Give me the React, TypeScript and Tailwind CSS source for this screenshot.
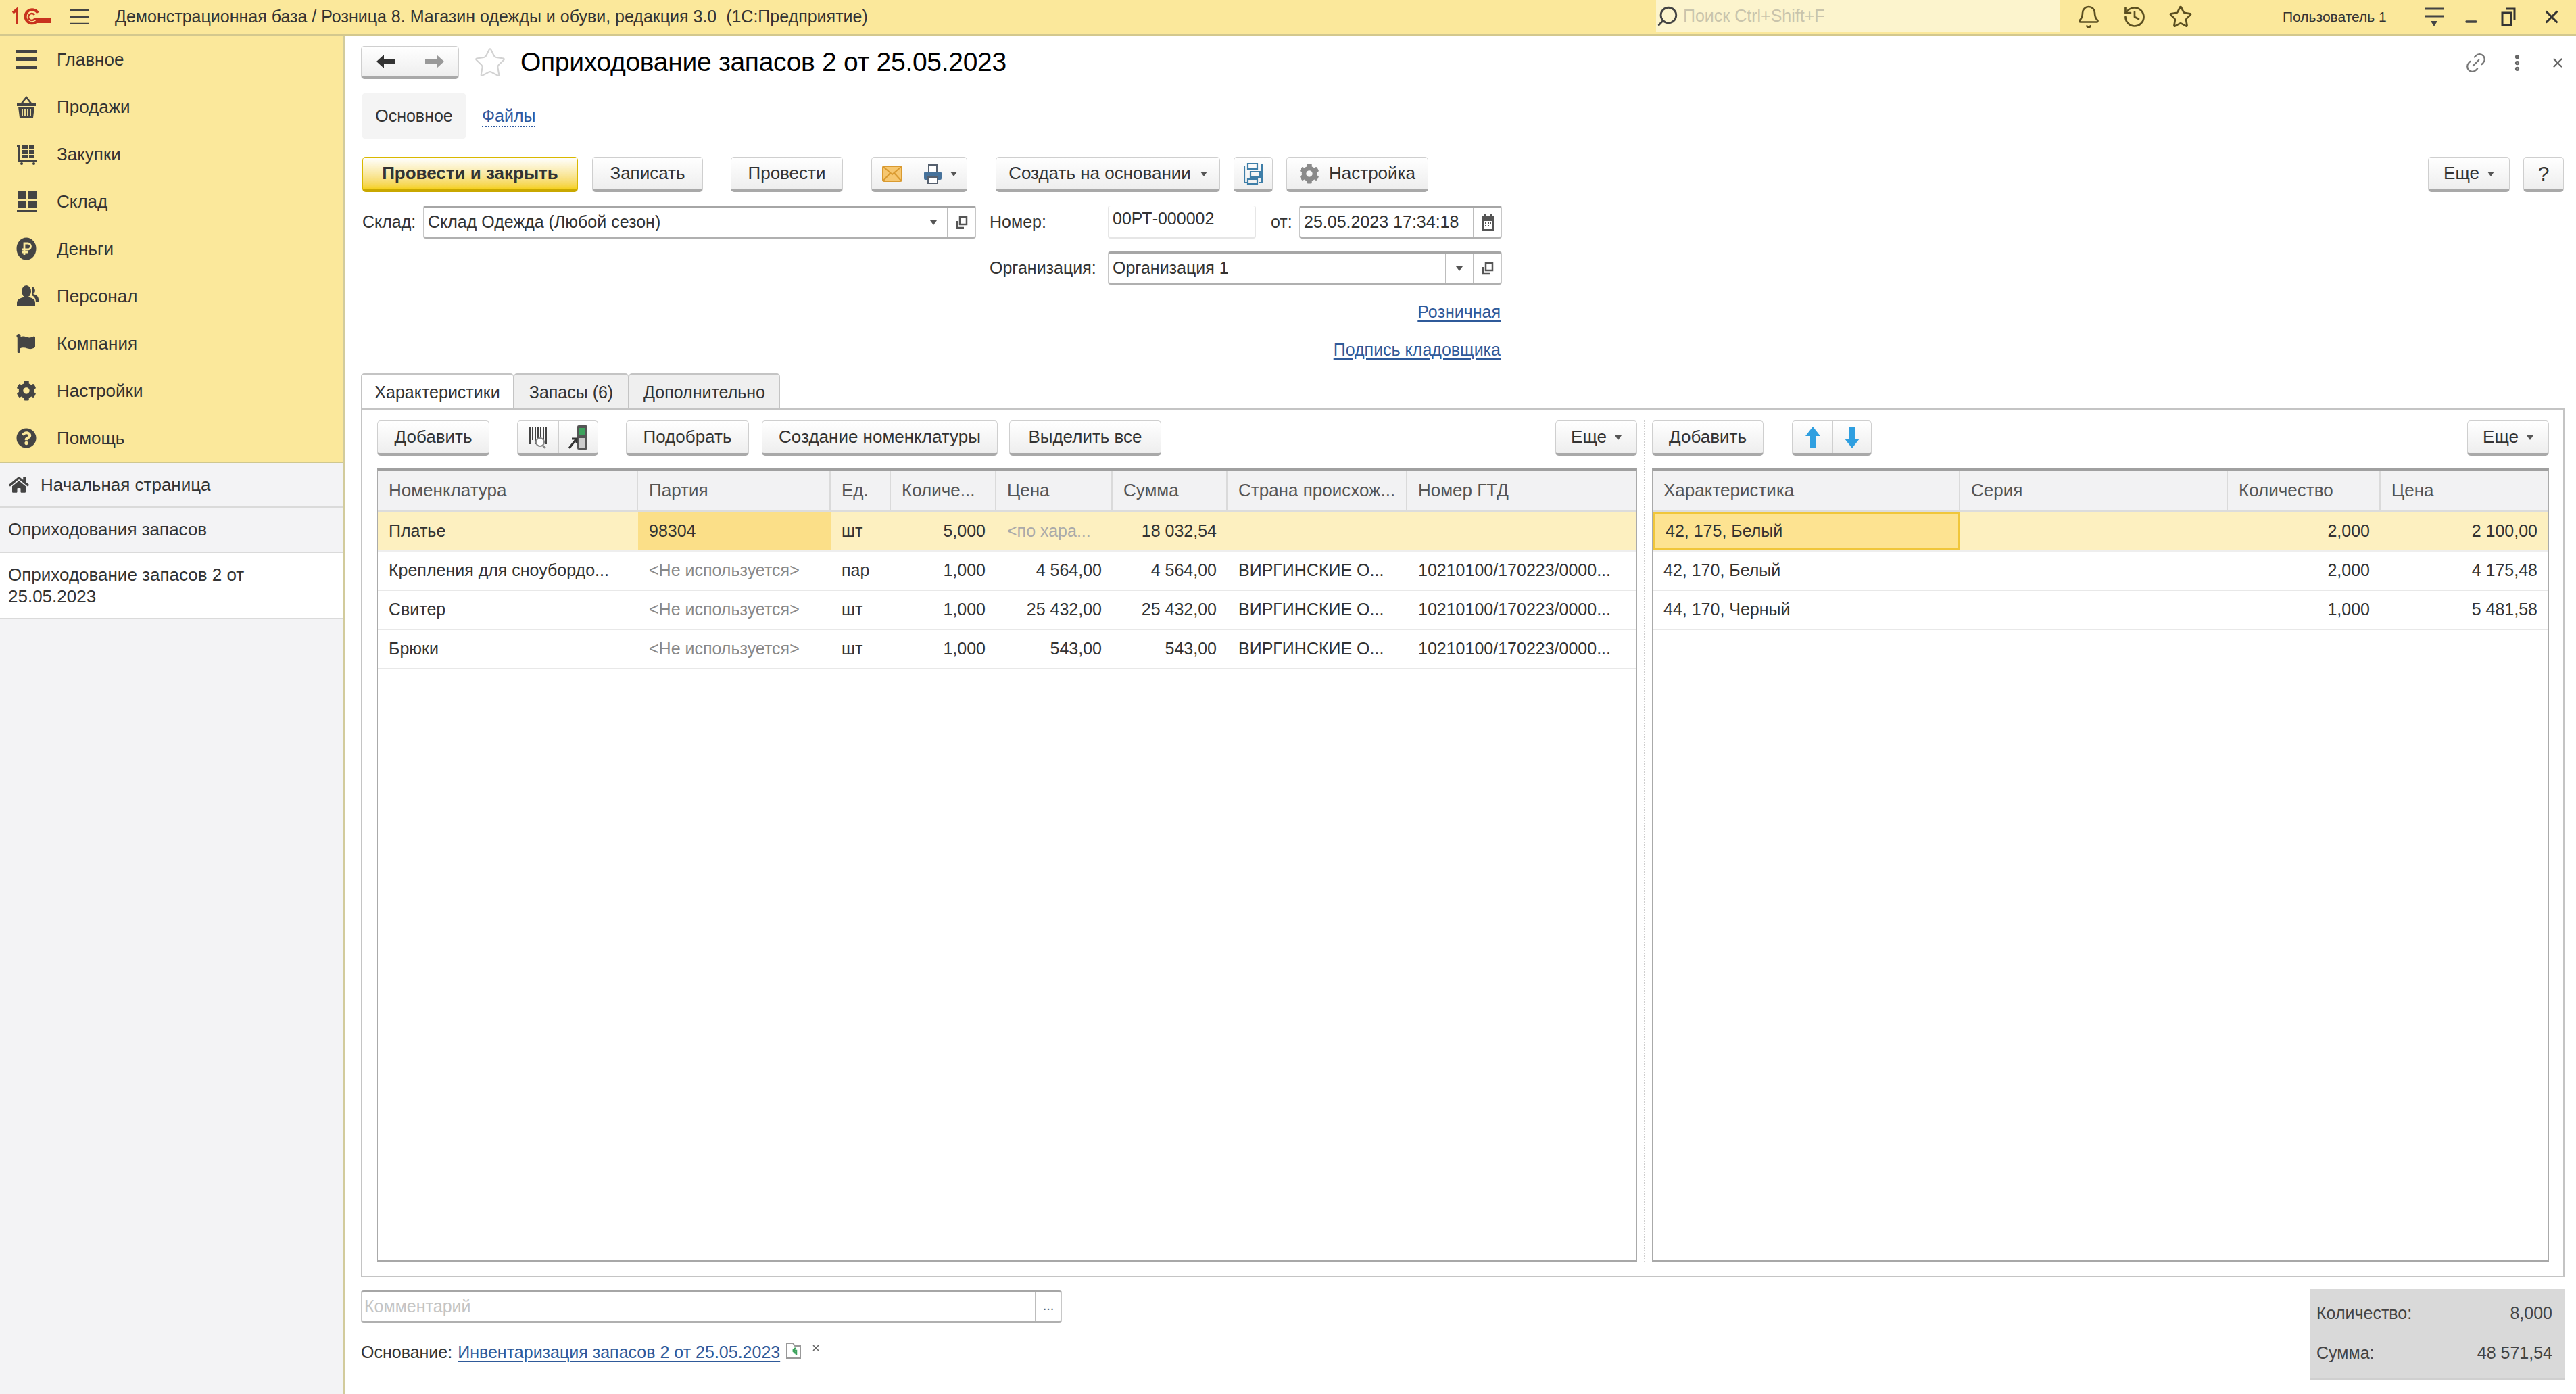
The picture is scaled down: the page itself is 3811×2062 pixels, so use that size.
import type { ReactNode } from 'react';
import { Star, Link2, EllipsisVertical, X, Bell, History, Search, Minus } from 'lucide-react';
import { FaCog, FaFlag, FaHome, FaQuestionCircle, FaUser } from 'react-icons/fa';

const Caret = ({ className = '' }: { className?: string }) => (
  <svg viewBox="0 0 10 8" className={`w-[10px] h-[8px] ${className}`}>
    <path d="M0 1h10L5 8z" fill="#555" />
  </svg>
);

const OpenIcon = () => (
  <svg viewBox="0 0 18 20" className="w-[18px] h-[20px]">
    <path d="M6 2h10v11H6z" fill="none" stroke="#555" strokeWidth="2.5" />
    <path d="M2 8v10h10" fill="none" stroke="#555" strokeWidth="2.5" />
  </svg>
);

function Btn({ children, className = '' }: { children: ReactNode; className?: string }) {
  return (
    <div
      className={`h-[52px] flex items-center justify-center shrink-0 rounded-[5px] border border-[#cfcfcf] border-b-[4px] border-b-[#a9a9a9] bg-linear-to-b from-white to-[#eeeeee] text-[#333] text-[26px] ${className}`}
    >
      {children}
    </div>
  );
}

function Field({ children, className = '', light = false }: { children: ReactNode; className?: string; light?: boolean }) {
  return (
    <div
      className={`h-[49px] flex items-stretch shrink-0 rounded-[4px] bg-white text-[#333] text-[25px] border ${
        light ? 'border-[#e6e6e6] border-b-[3px]' : 'border-[#c8c8c8] border-t-[3px] border-t-[#a6a6a6] border-b-[3px] border-b-[#b0b0b0]'
      } ${className}`}
    >
      {children}
    </div>
  );
}

const FieldBtn = ({ children, className = '' }: { children: ReactNode; className?: string }) => (
  <div className={`shrink-0 flex items-center justify-center border-l border-[#bdbdbd] ${className}`}>{children}</div>
);

const Basket = () => (
  <svg viewBox="0 0 30 32" className="w-[30px] h-[32px]" fill="#444">
    <path d="M1 11h28v4H1z" />
    <path d="M3 16h24l-2 16H5z" />
    <path d="M8 11 15 2l7 9" fill="none" stroke="#444" strokeWidth="2.5" />
    <path d="M9 19v10M13 19v10M17 19v10M21 19v10" stroke="#fbe99b" strokeWidth="1.8" />
  </svg>
);

const CartGrid = () => (
  <svg viewBox="0 0 32 32" className="w-[32px] h-[32px]" fill="#444">
    <path d="M1 2h5v22h24v3H3V5H1z" />
    <path d="M9 2h8v6H9zM19 2h8v6h-8zM9 10h8v6H9zM19 10h8v6h-8zM9 17h8v5H9zM19 17h8v5h-8z" />
    <circle cx="8" cy="30" r="2" />
    <circle cx="26" cy="30" r="2" />
  </svg>
);

const Warehouse = () => (
  <svg viewBox="0 0 32 32" className="w-[32px] h-[32px]" fill="#444">
    <path d="M2 1h12v12H2zM17 1h13v12H17zM2 15h12v11H2zM17 15h13v11H17zM1 28h30v3H1z" />
  </svg>
);

const Ruble = () => (
  <svg viewBox="0 0 30 34" className="w-[30px] h-[34px]">
    <ellipse cx="15" cy="17" rx="14.5" ry="16.5" fill="#444" />
    <path d="M12 26V9h5a4.5 4.5 0 0 1 0 9H8M8 22h9" fill="none" stroke="#fbe99b" strokeWidth="2.8" />
  </svg>
);

const People = () => (
  <svg viewBox="0 0 34 32" className="w-[34px] h-[32px]" fill="#444">
    <path d="M23 2a6 6 0 0 1 2 11c4 1 8 3 8 8v4h-4c0-6-3-9-6-10z" />
    <ellipse cx="15" cy="9" rx="7" ry="9" />
    <path d="M1 31v-5c0-5 5-7 9-8h10c4 1 8 3 8 8v5z" />
  </svg>
);

const BarsIcon = () => (
  <svg viewBox="0 0 30 28" className="w-[30px] h-[28px]" fill="#444">
    <path d="M0 0h30v5H0zM0 11h30v5H0zM0 23h30v5H0z" />
  </svg>
);

const navItems: { label: string; icon: ReactNode }[] = [
  { label: 'Главное', icon: <BarsIcon /> },
  { label: 'Продажи', icon: <Basket /> },
  { label: 'Закупки', icon: <CartGrid /> },
  { label: 'Склад', icon: <Warehouse /> },
  { label: 'Деньги', icon: <Ruble /> },
  { label: 'Персонал', icon: <People /> },
  { label: 'Компания', icon: <FaFlag size={28} color="#444" /> },
  { label: 'Настройки', icon: <FaCog size={30} color="#444" /> },
  { label: 'Помощь', icon: <FaQuestionCircle size={30} color="#444" /> },
];

const leftCols = 'grid-cols-[385px_285px_89px_156px_172px_170px_266px_1fr]';
const rightCols = 'grid-cols-[455px_396px_226px_1fr]';

const leftHeader = ['Номенклатура', 'Партия', 'Ед.', 'Количе...', 'Цена', 'Сумма', 'Страна происхож...', 'Номер ГТД'];
const rightHeader = ['Характеристика', 'Серия', 'Количество', 'Цена'];

const gtd = '10210100/170223/0000...';
const leftRows = [
  { name: 'Крепления для сноубордо...', unit: 'пар', qty: '1,000', price: '4 564,00', sum: '4 564,00' },
  { name: 'Свитер', unit: 'шт', qty: '1,000', price: '25 432,00', sum: '25 432,00' },
  { name: 'Брюки', unit: 'шт', qty: '1,000', price: '543,00', sum: '543,00' },
];
const rightRows = [
  ['42, 170, Белый', '2,000', '4 175,48'],
  ['44, 170, Черный', '1,000', '5 481,58'],
];

const Cell = ({ children, className = '' }: { children?: ReactNode; className?: string }) => (
  <div className={`px-[16px] flex items-center whitespace-nowrap overflow-hidden ${className}`}>{children}</div>
);

function HeaderRow({ cols, titles }: { cols: string; titles: string[] }) {
  return (
    <div className={`grid ${cols} h-[62px] shrink-0 bg-[#f2f2f3] border-b-[3px] border-[#dcdcdc] text-[#555] text-[26px]`}>
      {titles.map((t, i) => (
        <div key={t} className={`flex items-center px-[16px] whitespace-nowrap border-[#dadada] ${i < titles.length - 1 ? 'border-r-2' : ''}`}>
          {t}
        </div>
      ))}
    </div>
  );
}

export default function App() {
  return (
    <div className="w-[3811px] h-[2062px] flex flex-col overflow-hidden bg-white font-['Liberation_Sans',Arial,sans-serif] text-[#333]">
      {/* top bar */}
      <div className="h-[53px] shrink-0 flex items-center bg-[#fbe89b] border-b-[3px] border-[#d3c88e]">
        <div className="w-[170px] shrink-0 flex items-center pl-[18px]">
          <svg viewBox="0 0 58 28" className="w-[58px] h-[28px]" fill="none" stroke="#c8321e" strokeWidth="4">
            <path d="M1 8l6-5v22" />
            <path d="M38 8a10 10 0 1 0-2 13h22" />
            <path d="M33 11a5 5 0 1 0 0 6h25" strokeWidth="2.5" />
          </svg>
          <svg viewBox="0 0 28 22" className="w-[28px] h-[22px] ml-[28px]">
            <path d="M0 1h28M0 11h28M0 21h28" stroke="#444" strokeWidth="2.5" />
          </svg>
        </div>
        <div className="w-[2280px] shrink-0 text-[25px] whitespace-pre">Демонстрационная база / Розница 8. Магазин одежды и обуви, редакция 3.0  (1С:Предприятие)</div>
        <div className="w-[598px] h-[47px] self-start shrink-0 flex items-center bg-[#fcf4cd] text-[#c9c4ac] text-[25px]">
          <Search size={34} color="#444" strokeWidth={2} className="mr-[6px] -scale-x-100" />
          Поиск Ctrl+Shift+F
        </div>
        <div className="flex items-center ml-[24px] gap-[32px]">
          <Bell size={36} color="#5a4e20" strokeWidth={1.8} />
          <History size={36} color="#5a4e20" strokeWidth={1.8} />
          <Star size={36} color="#5a4e20" strokeWidth={1.8} />
        </div>
        <div className="ml-[133px] w-[190px] shrink-0 text-[21px] whitespace-nowrap">Пользователь 1</div>
        <svg viewBox="0 0 28 30" className="w-[28px] h-[30px] ml-[20px]">
          <path d="M0 3h28M0 14h28" stroke="#444" strokeWidth="3" />
          <path d="M9 21h10l-5 8z" fill="#444" />
        </svg>
        <Minus size={24} color="#444" strokeWidth={3.5} className="ml-[29px] mt-[14px]" />
        <svg viewBox="0 0 22 28" className="w-[22px] h-[28px] ml-[32px]" fill="none" stroke="#333" strokeWidth="3">
          <path d="M7 2h13v17" />
          <path d="M2 8h13v18H2z" />
        </svg>
        <X size={30} color="#333" strokeWidth={2.5} className="ml-[38px]" />
      </div>

      <div className="flex-1 flex min-h-0">
        {/* sidebar */}
        <div className="w-[511px] shrink-0 flex flex-col bg-[#f3f3f5] border-r-[3px] border-[#d2cb9c]">
          <div className="bg-[#fbe89b] border-b-2 border-[#cfc78f]">
            {navItems.map((item) => (
              <div key={item.label} className="h-[70px] flex items-center text-[26px]">
                <div className="w-[84px] pl-[24px] shrink-0 flex items-center">{item.icon}</div>
                {item.label}
              </div>
            ))}
          </div>
          <div className="h-[66px] flex items-center pl-[13px] text-[26px] border-b-2 border-[#dadada]">
            <FaHome size={30} color="#444" className="mr-[17px]" />
            Начальная страница
          </div>
          <div className="h-[67px] flex items-center pl-[12px] text-[26px] border-b-2 border-[#dadada]">Оприходования запасов</div>
          <div className="h-[98px] flex items-center pl-[12px] pr-[120px] text-[26px] leading-[32px] bg-white border-b-2 border-[#dadada]">
            Оприходование запасов 2 от 25.05.2023
          </div>
        </div>

        {/* form */}
        <div className="flex-1 min-w-0 flex flex-col pl-[23px] pr-[18px]">
          <div className="flex items-center mt-[15px] h-[49px] shrink-0">
            <div className="w-[145px] h-[49px] flex rounded-[5px] border border-[#cfcfcf] border-b-[4px] border-b-[#a9a9a9] bg-linear-to-b from-white to-[#eeeeee]">
              <div className="flex-1 flex items-center justify-center border-r border-[#d0d0d0]">
                <svg viewBox="0 0 28 22" className="w-[28px] h-[22px]"><path d="M0 11 11 1v6h17v8H11v6z" fill="#333" /></svg>
              </div>
              <div className="flex-1 flex items-center justify-center">
                <svg viewBox="0 0 28 22" className="w-[28px] h-[22px]"><path d="M28 11 17 1v6H0v8h17v6z" fill="#999" /></svg>
              </div>
            </div>
            <Star size={50} color="#d2d2d2" strokeWidth={1} className="ml-[21px]" />
            <div className="ml-[20px] text-[39px] tracking-[-0.3px] text-black whitespace-nowrap">Оприходование запасов 2 от 25.05.2023</div>
            <div className="ml-auto flex items-center mr-[-2px]">
              <Link2 size={36} color="#777" strokeWidth={1.5} className="-rotate-45" />
              <EllipsisVertical size={30} color="#666" strokeWidth={3} className="ml-[28px]" />
              <X size={22} color="#666" strokeWidth={2.5} className="ml-[34px]" />
            </div>
          </div>

          <div className="flex items-center mt-[21px] h-[67px] shrink-0 text-[25px]">
            <div className="w-[153px] h-full flex items-center justify-center bg-[#f4f4f4] rounded-[4px] ml-[2px]">Основное</div>
            <div className="ml-[24px] text-[#2f5aa0] border-b-2 border-dotted border-[#2f5aa0] leading-[30px]">Файлы</div>
          </div>

          <div className="flex items-center mt-[27px] shrink-0">
            <Btn className="w-[319px] ml-[2px] border-[#d9b800] border-b-[#c9a800] from-[#fbe34a] to-[#f5d000] font-bold text-[25px]">Провести и закрыть</Btn>
            <Btn className="w-[164px] ml-[21px]">Записать</Btn>
            <Btn className="w-[166px] ml-[41px]">Провести</Btn>
            <Btn className="w-[142px] ml-[42px]">
              <div className="w-[61px] h-full flex items-center justify-center border-r border-[#cfcfcf]">
                <svg viewBox="0 0 30 24" className="w-[30px] h-[24px]">
                  <rect x="1" y="1" width="28" height="22" rx="2" fill="#f6c770" stroke="#d99a30" strokeWidth="2" />
                  <path d="M2 2l13 11L28 2M2 22l10-11M28 22 18 11" fill="none" stroke="#d99a30" strokeWidth="2" />
                </svg>
              </div>
              <div className="flex-1 h-full flex items-center justify-center gap-[12px]">
                <svg viewBox="0 0 28 30" className="w-[28px] h-[30px]">
                  <path d="M8 12V2h12v10" fill="#fff" stroke="#56606e" strokeWidth="2" />
                  <rect x="1" y="12" width="26" height="12" rx="2" fill="#46729b" />
                  <path d="M7 20h14v9H7z" fill="#fff" stroke="#56606e" strokeWidth="2" />
                </svg>
                <Caret />
              </div>
            </Btn>
            <Btn className="w-[332px] ml-[42px] gap-[14px]">
              Создать на основании
              <Caret />
            </Btn>
            <Btn className="w-[58px] ml-[20px]">
              <svg viewBox="0 0 28 34" className="w-[28px] h-[34px]" fill="none" stroke="#3e7ea8" strokeWidth="2.2">
                <path d="M6 2h14v8H6zM10 14h14v8H10zM6 25h14v7H6zM1 6v24h4M27 3v27h-4" />
              </svg>
            </Btn>
            <Btn className="w-[210px] ml-[20px] gap-[14px]">
              <FaCog size={30} color="#8a8a8a" />
              Настройка
            </Btn>
            <Btn className="w-[121px] ml-auto gap-[12px]">
              Еще
              <Caret />
            </Btn>
            <Btn className="w-[60px] ml-[20px] text-[30px]">?</Btn>
          </div>

          <div className="flex mt-[20px] shrink-0">
            <div className="w-[930px] flex items-center h-[49px] shrink-0 text-[25px]">
              <span className="w-[92px] pl-[2px]">Склад:</span>
              <Field className="w-[818px]">
                <div className="flex-1 pl-[6px] flex items-center">Склад Одежда (Любой сезон)</div>
                <FieldBtn className="w-[42px]"><Caret /></FieldBtn>
                <FieldBtn className="w-[42px]"><OpenIcon /></FieldBtn>
              </Field>
            </div>
            <div className="flex-1 flex flex-col text-[25px]">
              <div className="flex items-center h-[49px]">
                <span className="w-[175px] shrink-0">Номер:</span>
                <Field light className="w-[219px] items-center pl-[6px]">00РТ-000002</Field>
                <span className="ml-[22px] w-[42px] shrink-0">от:</span>
                <Field className="w-[300px]">
                  <div className="flex-1 pl-[6px] flex items-center whitespace-nowrap">25.05.2023 17:34:18</div>
                  <FieldBtn className="w-[42px]">
                    <svg viewBox="0 0 20 24" className="w-[20px] h-[24px]" fill="#555">
                      <path d="M4 0h3v4H4zM13 0h3v4h-3zM1 3h18v21H1z" />
                      <path d="M4 10h12v11H4z" fill="#fff" />
                      <path d="M6 12h2v2H6zM10 12h2v2h-2zM14 12h1v2h-1zM6 16h2v2H6zM10 16h2v2h-2z" />
                    </svg>
                  </FieldBtn>
                </Field>
              </div>
              <div className="flex items-center h-[49px] mt-[19px]">
                <span className="w-[175px] shrink-0">Организация:</span>
                <Field className="w-[583px]">
                  <div className="flex-1 pl-[6px] flex items-center">Организация 1</div>
                  <FieldBtn className="w-[41px]"><Caret /></FieldBtn>
                  <FieldBtn className="w-[42px]"><OpenIcon /></FieldBtn>
                </Field>
              </div>
              <div className="w-[758px] flex flex-col items-end pr-[2px] text-[#2f5a9a]">
                <div className="mt-[24px] h-[32px] leading-[32px] underline underline-offset-4">Розничная</div>
                <div className="mt-[24px] h-[32px] leading-[32px] underline underline-offset-4">Подпись кладовщика</div>
              </div>
            </div>
          </div>

          {/* tabs */}
          <div className="flex mt-[19px] h-[55px] shrink-0 text-[25px]">
            <div className="w-[226px] flex items-center justify-center bg-white rounded-t-[5px] border border-b-0 border-[#c4c4c4] border-t-2">Характеристики</div>
            <div className="w-[170px] flex items-center justify-center bg-[#efefef] rounded-t-[5px] border border-b-0 border-[#c4c4c4] border-t-2">Запасы (6)</div>
            <div className="w-[224px] flex items-center justify-center bg-[#efefef] rounded-t-[5px] border border-b-0 border-[#c4c4c4] border-t-2">Дополнительно</div>
          </div>

          {/* panel */}
          <div className="flex-1 min-h-0 flex pl-[22px] pr-[21px] pt-[15px] pb-[20px] border-2 border-[#c4c4c4] border-t-[3px] mt-[-3px] ml-0 -mr-[1px]">
            <div className="w-[1864px] shrink-0 flex flex-col">
              <div className="flex items-center shrink-0 text-[25px]">
                <Btn className="w-[166px]">Добавить</Btn>
                <Btn className="w-[120px] ml-[41px]">
                  <div className="w-[61px] h-full flex items-center justify-center border-r border-[#cfcfcf]">
                    <svg viewBox="0 0 30 34" className="w-[30px] h-[34px]">
                      <path d="M3 1v26M7 1v20M11 1v26M15 1v20M19 1v20M23 1v20M27 1v26" stroke="#444" strokeWidth="2" />
                      <circle cx="18" cy="24" r="6" fill="#fff" stroke="#888" strokeWidth="2" />
                      <path d="M22 29l4 4" stroke="#888" strokeWidth="2.5" />
                    </svg>
                  </div>
                  <div className="flex-1 h-full flex items-center justify-center">
                    <svg viewBox="0 0 32 40" className="w-[32px] h-[40px]">
                      <rect x="14" y="2" width="15" height="36" rx="2" fill="#555" />
                      <rect x="17" y="6" width="9" height="11" fill="#3da35d" />
                      <path d="M17 21h9v14h-9z" fill="#ccc" />
                      <path d="M2 36 13 22m-7 0h7v7" fill="none" stroke="#333" strokeWidth="3" />
                    </svg>
                  </div>
                </Btn>
                <Btn className="w-[182px] ml-[41px]">Подобрать</Btn>
                <Btn className="w-[349px] ml-[19px]">Создание номенклатуры</Btn>
                <Btn className="w-[225px] ml-[17px]">Выделить все</Btn>
                <Btn className="w-[121px] ml-auto gap-[12px]">Еще<Caret /></Btn>
              </div>
              <div className="flex-1 min-h-0 mt-[19px] flex flex-col border border-[#aaa] border-t-[3px] border-t-[#a0a0a0] border-b-[3px] border-b-[#a8a8a8] bg-white text-[25px]">
                <HeaderRow cols={leftCols} titles={leftHeader} />
                <div className={`grid ${leftCols} h-[58px] shrink-0 bg-[#fdf0c0] border-b-2 border-[#eeeeee]`}>
                  <Cell>Платье</Cell>
                  <Cell className="bg-[#fbdf88]">98304</Cell>
                  <Cell>шт</Cell>
                  <Cell className="justify-end">5,000</Cell>
                  <Cell className="text-[#aaa]">&lt;по хара...</Cell>
                  <Cell className="justify-end">18 032,54</Cell>
                  <Cell />
                  <Cell />
                </div>
                {leftRows.map((r) => (
                  <div key={r.name} className={`grid ${leftCols} h-[58px] shrink-0 border-b-2 border-[#e8e8e8]`}>
                    <Cell>{r.name}</Cell>
                    <Cell className="text-[#888]">&lt;Не используется&gt;</Cell>
                    <Cell>{r.unit}</Cell>
                    <Cell className="justify-end">{r.qty}</Cell>
                    <Cell className="justify-end">{r.price}</Cell>
                    <Cell className="justify-end">{r.sum}</Cell>
                    <Cell>ВИРГИНСКИЕ О...</Cell>
                    <Cell>{gtd}</Cell>
                  </div>
                ))}
              </div>
            </div>

            <div className="w-[22px] shrink-0 flex justify-center">
              <div className="h-full border-l-2 border-dotted border-[#cfcfcf]" />
            </div>

            <div className="flex-1 min-w-0 flex flex-col">
              <div className="flex items-center shrink-0 text-[25px]">
                <Btn className="w-[165px]">Добавить</Btn>
                <Btn className="w-[118px] ml-[42px]">
                  <div className="w-[60px] h-full flex items-center justify-center border-r border-[#cfcfcf]">
                    <svg viewBox="0 0 24 34" className="w-[24px] h-[34px]"><path d="M12 1 23 15h-7v18H8V15H1z" fill="#2f9fe0" /></svg>
                  </div>
                  <div className="flex-1 h-full flex items-center justify-center">
                    <svg viewBox="0 0 24 34" className="w-[24px] h-[34px]"><path d="M12 33 23 19h-7V1H8v18H1z" fill="#2f9fe0" /></svg>
                  </div>
                </Btn>
                <Btn className="w-[121px] ml-auto gap-[12px]">Еще<Caret /></Btn>
              </div>
              <div className="flex-1 min-h-0 mt-[19px] flex flex-col border border-[#aaa] border-t-[3px] border-t-[#a0a0a0] border-b-[3px] border-b-[#a8a8a8] bg-white text-[25px]">
                <HeaderRow cols={rightCols} titles={rightHeader} />
                <div className={`grid ${rightCols} h-[58px] shrink-0 bg-[#fdf0c0] border-b-2 border-[#eeeeee]`}>
                  <Cell className="bg-[#fde391] border-[3px] border-[#f0c63a]">42, 175, Белый</Cell>
                  <Cell />
                  <Cell className="justify-end">2,000</Cell>
                  <Cell className="justify-end">2 100,00</Cell>
                </div>
                {rightRows.map((r) => (
                  <div key={r[0]} className={`grid ${rightCols} h-[58px] shrink-0 border-b-2 border-[#e8e8e8]`}>
                    <Cell>{r[0]}</Cell>
                    <Cell />
                    <Cell className="justify-end">{r[1]}</Cell>
                    <Cell className="justify-end">{r[2]}</Cell>
                  </div>
                ))}
              </div>
            </div>
          </div>

          {/* footer */}
          <div className="h-[173px] shrink-0 flex justify-between text-[25px]">
            <div className="flex flex-col">
              <Field className="w-[1037px] mt-[19px]">
                <div className="flex-1 pl-[4px] flex items-center text-[#c4c4c4]">Комментарий</div>
                <FieldBtn className="w-[39px] text-[#666] items-end pb-[8px] text-[20px]">...</FieldBtn>
              </Field>
              <div className="flex items-center mt-[26px] h-[36px]">
                <span>Основание:</span>
                <span className="ml-[8px] text-[#2f5a9a] underline underline-offset-4 whitespace-nowrap">Инвентаризация запасов 2 от 25.05.2023</span>
                <svg viewBox="0 0 24 26" className="w-[24px] h-[26px] ml-[8px] mt-[-6px]" fill="none">
                  <path d="M2 24V2h9l3 4h8v18z" fill="#fff" stroke="#999" strokeWidth="2" />
                  <path d="M16 20v-7h-5m0 0 4-4m-4 4 4 4" stroke="#3da35d" strokeWidth="2.5" />
                </svg>
                <X size={14} color="#666" strokeWidth={3} className="ml-[14px] mt-[-14px]" />
              </div>
            </div>
            <div className="w-[377px] h-[135px] mt-[17px] mr-[-1px] flex flex-col justify-between py-[18px] px-[10px] pr-[18px] bg-[#d9d9d9] border-b-[3px] border-[#cfcfcf] text-[#444]">
              <div className="flex justify-between"><span>Количество:</span><span>8,000</span></div>
              <div className="flex justify-between"><span>Сумма:</span><span>48 571,54</span></div>
            </div>
          </div>
        </div>
      </div>
    </div>
  );
}
